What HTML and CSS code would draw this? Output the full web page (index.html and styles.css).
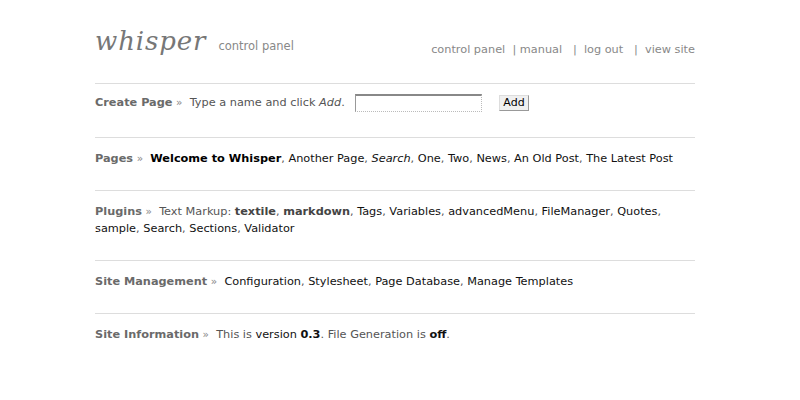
FILE: index.html
```html
<!DOCTYPE html>
<html>
<head>
<meta charset="utf-8">
<title>whisper control panel</title>
<link rel="stylesheet" href="styles.css">
</head>
<body>
<div class="wrap">
  <div class="header">
    <div class="brand"><span class="logo">whisper</span><span class="sub">control panel</span></div>
    <div class="nav"><a href="#">control panel</a> &nbsp;| <a href="#">manual</a> &nbsp; | &nbsp;<a href="#">log out</a> &nbsp; | &nbsp;<a href="#">view site</a></div>
  </div>
  <div class="sec create">
    <span class="lbl">Create Page</span> <span class="raq">»</span>&nbsp; Type a name and click <em>Add</em>. <input class="field" type="text"><button class="btn">Add</button>
  </div>
  <div class="sec">
    <span class="lbl">Pages</span> <span class="raq">»</span>&nbsp; <a class="strong" href="#">Welcome to Whisper</a>, <a href="#">Another Page</a>, <a href="#"><em>Search</em></a>, <a href="#">One</a>, <a href="#">Two</a>, <a href="#">News</a>, <a href="#">An Old Post</a>, <a href="#">The Latest Post</a>
  </div>
  <div class="sec">
    <span class="lbl">Plugins</span> <span class="raq">»</span>&nbsp; Text Markup: <b class="mk">textile</b>, <b class="mk">markdown</b>, <a href="#">Tags</a>, <a href="#">Variables</a>, <a href="#">advancedMenu</a>, <a href="#">FileManager</a>, <a href="#">Quotes</a>,<br><a href="#">sample</a>, <a href="#">Search</a>, <a href="#">Sections</a>, <a href="#">Validator</a>
  </div>
  <div class="sec">
    <span class="lbl">Site Management</span> <span class="raq">»</span>&nbsp; <a href="#">Configuration</a>, <a href="#">Stylesheet</a>, <a href="#">Page Database</a>, <a href="#">Manage Templates</a>
  </div>
  <div class="sec last">
    <span class="lbl">Site Information</span> <span class="raq">»</span>&nbsp; This is <span class="dark">version <b>0.3</b></span>. File Generation is <b class="dark">off</b>.
  </div>
</div>
</body>
</html>
```
FILE: styles.css
```css
html, body {
  margin: 0;
  padding: 0;
  background: #fff;
}
body {
  font-family: "DejaVu Sans", Verdana, sans-serif;
  font-size: 11.3px;
  color: #555;
}
.wrap {
  width: 600px;
  margin-left: 95px;
  padding-top: 26px;
}
a {
  color: #111;
  text-decoration: none;
}
.header {
  display: flex;
  justify-content: space-between;
  align-items: baseline;
  height: 58px;
  border-bottom: 1px solid #ddd;
  box-sizing: border-box;
}
.brand {
  display: flex;
  align-items: baseline;
}
.logo {
  font-family: "DejaVu Serif", Georgia, serif;
  font-style: italic;
  font-size: 26px;
  color: #777;
  letter-spacing: 0.9px;
}
.sub {
  margin-left: 12px;
  color: #888;
  font-size: 11.5px;
}
.nav {
  color: #888;
  font-size: 11.3px;
  position: relative;
  top: 3px;
}
.nav a {
  color: #888;
}
.sec {
  border-bottom: 1px solid #ddd;
  padding: 12px 0 23px;
  line-height: 17px;
}
.create {
  padding: 10px 0 26px;
  height: 17px;
}
.last {
  border-bottom: none;
}
.lbl {
  font-weight: bold;
  color: #6a6a6a;
}
.raq {
  color: #888;
  font-size: 10.5px;
}
.strong {
  font-weight: bold;
  color: #000;
}
.mk {
  color: #444;
}
.dark {
  color: #111;
}
.field {
  width: 121px;
  height: 13px;
  margin: 0 0 0 7px;
  padding: 1px 2px;
  border: 1px dotted #bbb;
  border-top: 2px solid #888;
  border-left: 1px solid #999;
  background: #fff;
  vertical-align: middle;
}
.btn {
  margin-left: 17px;
  font-family: "DejaVu Sans", Verdana, sans-serif;
  font-size: 11px;
  padding: 1px 3px;
  height: 16px;
  line-height: 12px;
  background: #f0f0f0;
  border: 1px solid #999;
  border-top-color: #ddd;
  border-left-color: #ddd;
  color: #000;
  vertical-align: middle;
}
```
